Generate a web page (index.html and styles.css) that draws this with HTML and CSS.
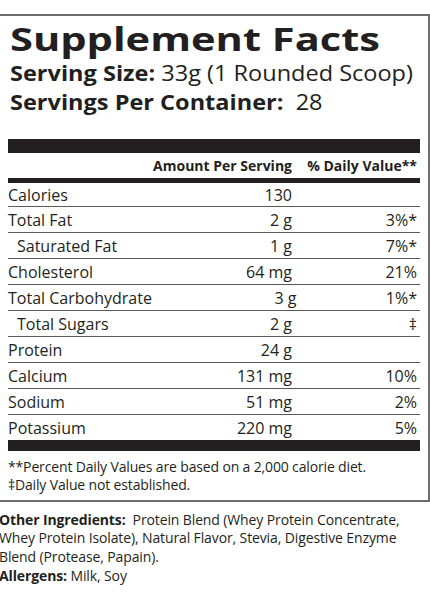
FILE: index.html
```html
<!DOCTYPE html>
<html lang="en">
<head>
  <meta charset="UTF-8" />
  <meta name="viewport" content="width=device-width, initial-scale=1.0"/>
  <title>Supplement Facts</title>
  <link rel="stylesheet" href="styles.css">
</head>
<body>
  <div class="facts">
    <h1 class="title"><span>Supplement Facts</span></h1>
    <div class="serving"><span><strong>Serving Size:</strong> 33g (1 Rounded Scoop)</span></div>
    <div class="serving"><span><strong>Servings Per Container:</strong>&nbsp; 28</span></div>

    <div class="bar-thick"></div>
    <div class="row head">
      <span class="name"></span>
      <span class="amount">Amount Per Serving</span>
      <span class="dv">% Daily Value**</span>
    </div>
    <div class="bar-mid"></div>

    <div class="row first">
      <span class="name">Calories</span>
      <span class="amount">130</span>
      <span class="dv"></span>
    </div>
    <div class="row">
      <span class="name">Total Fat</span>
      <span class="amount">2 g</span>
      <span class="dv">3%*</span>
    </div>
    <div class="row sub">
      <span class="name">Saturated Fat</span>
      <span class="amount">1 g</span>
      <span class="dv">7%*</span>
    </div>
    <div class="row">
      <span class="name">Cholesterol</span>
      <span class="amount">64 mg</span>
      <span class="dv">21%</span>
    </div>
    <div class="row">
      <span class="name">Total Carbohydrate</span>
      <span class="amount">3 g</span>
      <span class="dv">1%*</span>
    </div>
    <div class="row sub">
      <span class="name">Total Sugars</span>
      <span class="amount">2 g</span>
      <span class="dv">‡</span>
    </div>
    <div class="row">
      <span class="name">Protein</span>
      <span class="amount">24 g</span>
      <span class="dv"></span>
    </div>
    <div class="row">
      <span class="name">Calcium</span>
      <span class="amount">131 mg</span>
      <span class="dv">10%</span>
    </div>
    <div class="row">
      <span class="name">Sodium</span>
      <span class="amount">51 mg</span>
      <span class="dv">2%</span>
    </div>
    <div class="row">
      <span class="name">Potassium</span>
      <span class="amount">220 mg</span>
      <span class="dv">5%</span>
    </div>
    <div class="bar-bottom"></div>

    <div class="notes">
      **Percent Daily Values are based on a 2,000 calorie diet.<br/>
      ‡Daily Value not established.
    </div>
  </div>

  <div class="ingredients">
    <strong>Other Ingredients:</strong>&nbsp; Protein Blend (Whey Protein Concentrate,<br/>
    Whey Protein Isolate), Natural Flavor, Stevia, Digestive Enzyme<br/>
    Blend (Protease, Papain).<br/>
    <strong>Allergens:</strong> Milk, Soy
  </div>
</body>
</html>
```

FILE: styles.css
```css
body {
  margin: 0;
  background: #fff;
  color: #231f20;
  font-family: "Open Sans", sans-serif;
  overflow: hidden;
}

.facts {
  box-sizing: border-box;
  width: 432px;
  margin: 14px 0 0 -2px;
  border: 2px solid #6d6d6d;
  padding: 2px 8px 6px 8px;
}

.title {
  margin: 0;
  padding-left: 2px;
  font-size: 32px;
  font-weight: 700;
  line-height: 41px;
  white-space: nowrap;
}

.title span,
.serving span {
  display: inline-block;
  transform-origin: left center;
}

.title span {
  transform: scaleX(1.3);
}

.serving {
  padding-left: 2px;
  font-size: 21px;
  line-height: 29px;
  white-space: nowrap;
}

.serving span {
  transform: scaleX(1.12);
}

.bar-thick {
  height: 14px;
  margin-top: 22px;
  background: #231f20;
}

.row {
  display: flex;
  align-items: center;
  height: 25px;
  border-top: 1px solid #5a5a5a;
  font-size: 16px;
  white-space: nowrap;
}

.row .name {
  flex: 1;
}

.row .amount {
  width: 150px;
  text-align: right;
}

.row .dv {
  width: 125px;
  text-align: right;
  padding-right: 3px;
}

.row.head {
  border-top: none;
  font-size: 14px;
  font-weight: 700;
}

.row.first {
  height: 23px;
  border-top: none;
}

.row.sub .name {
  padding-left: 9px;
}

.bar-mid {
  height: 5px;
  background: #231f20;
}

.bar-bottom {
  height: 11px;
  background: #231f20;
}

.notes {
  padding-top: 6.5px;
  font-size: 14px;
  line-height: 18px;
  letter-spacing: -0.15px;
  white-space: nowrap;
}

.ingredients {
  margin: 9.3px 0 0 -1px;
  font-size: 14px;
  line-height: 18.6px;
  letter-spacing: -0.12px;
  white-space: nowrap;
}
```
